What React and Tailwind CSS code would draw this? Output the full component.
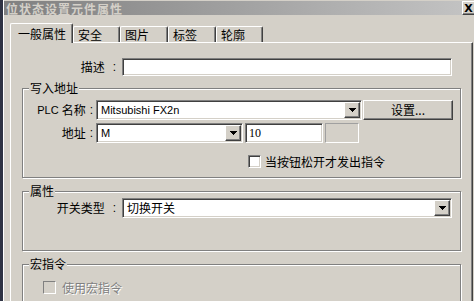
import React from 'react';

const sunken =
  'border border-t-[#808080] border-l-[#808080] border-b-white border-r-white shadow-[inset_1px_1px_0_#404040,inset_-1px_-1px_0_#d4d0c8]';
const raised =
  'border border-t-white border-l-white border-b-[#404040] border-r-[#404040] shadow-[inset_-1px_-1px_0_#808080]';
const etched = 'border border-[#808080] shadow-[inset_1px_1px_0_#fff,1px_1px_0_#fff]';

const DownArrow = () => (
  <svg width="7" height="4" viewBox="0 0 7 4" shapeRendering="crispEdges">
    <rect x="0" y="0" width="7" height="1" fill="#000" />
    <rect x="1" y="1" width="5" height="1" fill="#000" />
    <rect x="2" y="2" width="3" height="1" fill="#000" />
    <rect x="3" y="3" width="1" height="1" fill="#000" />
  </svg>
);

const Combo = ({ value, width, latin }) => (
  <div className={`${sunken} h-[20px] bg-white p-[1px] flex items-stretch`} style={{ width }}>
    <div
      className={`flex-1 flex items-center pl-[3px] text-black ${latin ? "text-[11px] font-['Liberation_Sans']" : 'text-[12px]'}`}
    >
      {value}
    </div>
    <div className={`${raised} w-[16px] bg-[#d4d0c8] flex items-center justify-center`}>
      <DownArrow />
    </div>
  </div>
);

const Label = ({ children, gap, className }) => (
  <div className={`flex justify-end items-center text-[12px] ${className}`}>
    {children}
    <span className={`${gap} font-['Liberation_Sans']`}>:</span>
  </div>
);

const Group = ({ title, className, children }) => (
  <div className={`${etched} ml-[11px] w-[439px] flex flex-col ${className}`}>
    <div className="-mt-[8px] ml-[6px] self-start px-[1px] bg-[#d4d0c8] text-[12px] leading-[14px]">{title}</div>
    {children}
  </div>
);

const tabs = [
  { name: '安全', w: 'w-[47px]' },
  { name: '图片', w: 'w-[48px]' },
  { name: '标签', w: 'w-[48px]' },
  { name: '轮廓', w: 'w-[47px]' },
];

export default function App() {
  return (
    <div
      className="w-[474px] h-[301px] overflow-hidden bg-[#2f3344] flex text-black"
      style={{ fontFamily: '"Noto Sans CJK SC", "Liberation Sans", sans-serif' }}
    >
      <div className="ml-[3px] flex-1 border-l border-white bg-[#d4d0c8] pt-[1px] flex flex-col">
        {/* title bar */}
        <div className="h-[19px] bg-gradient-to-r from-[#808080] to-[#c4c4c4] flex items-end justify-between">
          <span className="self-center pl-[2px] pt-[2px] text-[12px] font-bold tracking-[1px] text-[#d4d0c8] leading-none">
            位状态设置元件属性
          </span>
          <div
            className={`${raised} w-[16px] h-[14px] bg-[#d4d0c8] mr-[-4px] flex items-center justify-center text-[11px] font-bold leading-none font-['DejaVu_Sans']`}
          >
            <span className="-ml-[3px]">X</span>
          </div>
        </div>

        {/* tabs */}
        <div className="ml-[6px] mt-[8px] flex items-end relative z-10">
          <div className="w-[63px] h-[20px] -mb-[1px] bg-[#d4d0c8] border-t border-l border-white border-r border-r-[#404040] shadow-[inset_-1px_0_0_#808080] rounded-t-[2px] pl-[7px] pt-[2px] text-[12px] leading-[16px]">
            一般属性
          </div>
          {tabs.map((t) => (
            <div
              key={t.name}
              className={`${t.w} h-[16px] border-t border-l border-white border-r border-r-[#404040] shadow-[inset_-1px_0_0_#808080] rounded-t-[2px] pl-[4px] text-[12px] leading-[15px]`}
            >
              {t.name}
            </div>
          ))}
        </div>

        {/* panel */}
        <div className="ml-[6px] w-[463px] flex-1 border-t border-l border-white border-r border-r-[#404040] shadow-[inset_-1px_0_0_#808080] flex flex-col">
          <div className="mt-[15px] flex items-center">
            <Label gap="ml-[8px] mr-[1px]" className="w-[106px]">描述</Label>
            <div className={`${sunken} ml-[5px] w-[330px] h-[18px] bg-white`} />
          </div>

          <Group title="写入地址" className="mt-[12px] h-[90px]">
            <div className="mt-[5px] flex items-center">
              <Label gap="ml-[4px]" className="w-[70px]">
                <span className="font-['Liberation_Sans'] text-[11px] mr-[3px]">PLC</span>名称
              </Label>
              <div className="ml-[3px]">
                <Combo value="Mitsubishi FX2n" width={266} latin />
              </div>
              <div className={`${raised} ml-[1px] w-[90px] h-[20px] bg-[#d4d0c8] flex items-center justify-center text-[12px]`}>
                设置...
              </div>
            </div>
            <div className="mt-[3px] flex items-center">
              <Label gap="ml-[4px]" className="w-[70px]">地址</Label>
              <div className="ml-[3px]">
                <Combo value="M" width={147} latin />
              </div>
              <div className={`${sunken} ml-[2px] w-[78px] h-[20px] bg-white flex items-center pl-[3px] text-[12px] font-['Liberation_Serif']`}>
                10
              </div>
              <div className="ml-[2px] w-[34px] h-[20px] border border-t-[#a0a0a0] border-l-[#a0a0a0] border-b-white border-r-white" />
            </div>
            <div className="mt-[12px] ml-[225px] flex items-center">
              <div className={`${sunken} w-[13px] h-[13px] bg-white`} />
              <span className="ml-[4px] text-[12px] leading-[13px]">当按钮松开才发出指令</span>
            </div>
          </Group>

          <Group title="属性" className="mt-[13px] h-[60px]">
            <div className="flex items-center">
              <Label gap="ml-[8px] mr-[1px]" className="w-[94px]">开关类型</Label>
              <div className="ml-[5px]">
                <Combo value="切换开关" width={330} />
              </div>
            </div>
          </Group>

          <Group title="宏指令" className="mt-[13px] h-[60px]">
            <div className="mt-[10px] ml-[20px] flex items-center">
              <div className="w-[13px] h-[13px] border border-t-[#808080] border-l-[#808080] border-b-white border-r-white bg-[#d4d0c8]" />
              <span className="ml-[6px] text-[12px] leading-[13px] text-[#808080] [text-shadow:1px_1px_0_#fff]">使用宏指令</span>
            </div>
          </Group>
        </div>
      </div>
    </div>
  );
}
